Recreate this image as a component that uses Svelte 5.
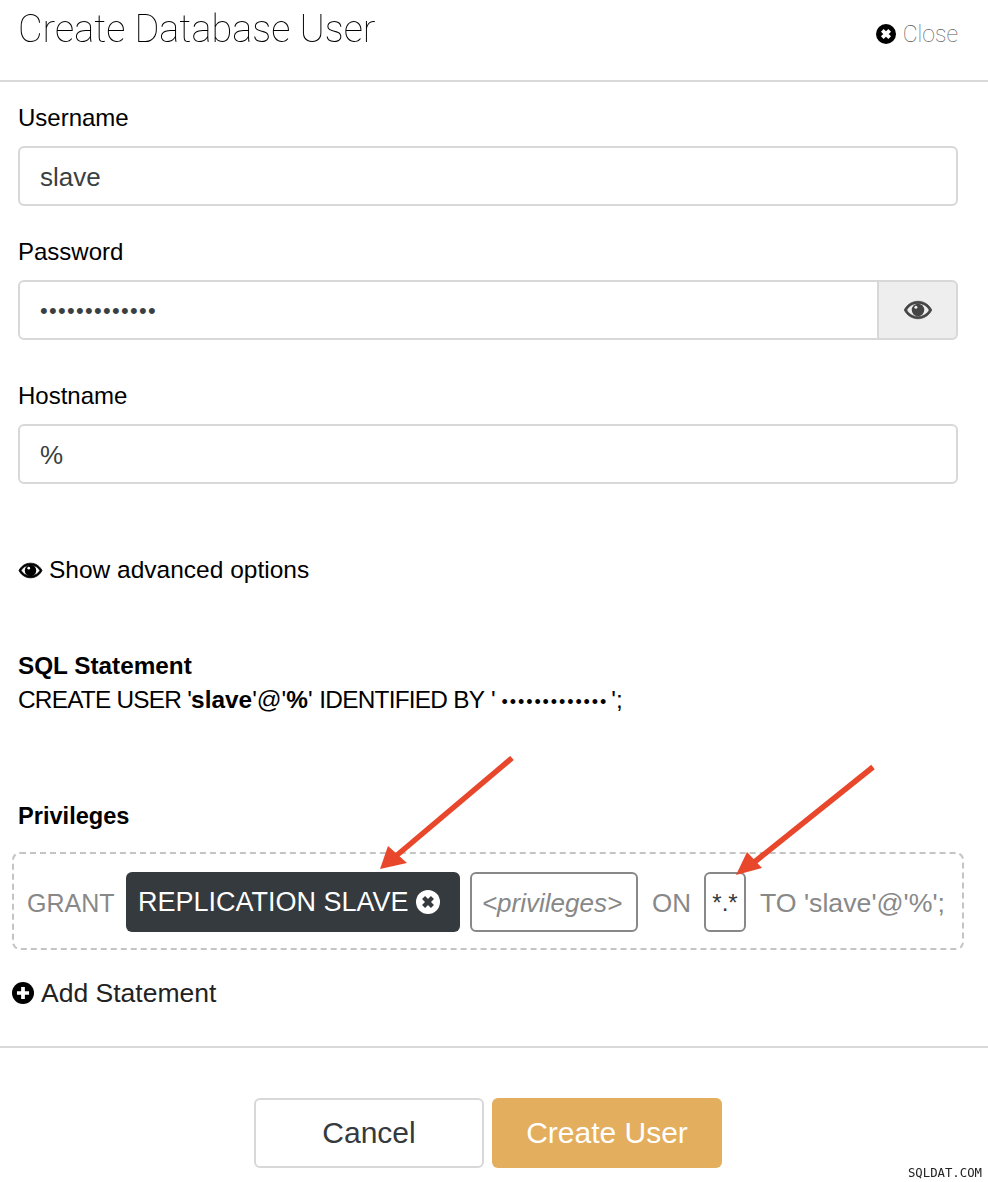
<script>
  const eyePath = 'M12 5C7 5 2.9 8 1 12c1.9 4 6 7 11 7s9.100-3 11-7c-1.900-4-6-7-11-7zm0 12.300c-4 0-7.300-2.200-9-5.300 1.700-3.100 5-5.300 9-5.300s7.300 2.200 9 5.300c-1.700 3.100-5 5.300-9 5.300z';
</script>

<div class="page">
  <header class="head">
    <h1>Create Database User</h1>
    <span class="close">
      <svg class="close-icon" viewBox="0 0 20 20"><circle cx="10" cy="10" r="10" fill="#000"/><path d="M6.300 6.300l7.400 7.400M13.700 6.300l-7.400 7.400" stroke="#fff" stroke-width="3.800"/></svg>
      Close
    </span>
  </header>

  <section class="fields">
    <label class="field-label" for="username">Username</label>
    <div class="input" id="username">slave</div>

    <label class="field-label" for="password">Password</label>
    <div class="input-group">
      <div class="input dots" id="password">•••••••••••••</div>
      <div class="addon">
        <svg class="eye-lg" viewBox="0 0 24 24"><path d={eyePath} fill="#444" stroke="#444" stroke-width="0.6"/><circle cx="12" cy="12" r="5" fill="#444"/><circle cx="10.300" cy="9.800" r="1.200" fill="#eee"/></svg>
      </div>
    </div>

    <label class="field-label" for="hostname">Hostname</label>
    <div class="input" id="hostname">%</div>
  </section>

  <div class="advanced">
    <svg class="eye-sm" viewBox="0 0 24 24"><path d={eyePath} fill="#000" stroke="#000" stroke-width="0.8"/><circle cx="12" cy="12" r="5.500" fill="#000"/><circle cx="10.300" cy="9.800" r="1.300" fill="#fff"/></svg>
    Show advanced options
  </div>

  <div class="sql">
    <strong class="sql-title">SQL Statement</strong>
    <div class="sql-line"><span class="sql-tight">CREATE USER '</span><strong>slave</strong>'@'<strong>%</strong>' <span class="sql-tight">IDENTIFIED BY</span> '<span class="sql-dots">•••••••••••••</span>';</div>
  </div>

  <h2>Privileges</h2>
  <div class="grant">
    <span class="kw g1">GRANT</span>
    <span class="chip">
      REPLICATION SLAVE
      <svg class="chip-x" viewBox="0 0 20 20"><circle cx="10" cy="10" r="10" fill="#fff"/><path d="M6.300 6.300l7.400 7.400M13.700 6.300l-7.400 7.400" stroke="#343a3e" stroke-width="3.600"/></svg>
    </span>
    <span class="box priv">&lt;privileges&gt;</span>
    <span class="kw on">ON</span>
    <span class="box scope">*.*</span>
    <span class="kw to">TO 'slave'@'%';</span>
  </div>

  <div class="add">
    <svg class="add-icon" viewBox="0 0 20 20"><circle cx="10" cy="10" r="10" fill="#000"/><path d="M10 4.500v11M4.500 10h11" stroke="#fff" stroke-width="3.400"/></svg>
    Add Statement
  </div>

  <footer class="foot">
    <button class="btn cancel">Cancel</button>
    <button class="btn create">Create User</button>
  </footer>

  <svg class="arrows" viewBox="0 0 988 1182">
    <g stroke="#e8472b" stroke-width="5.500" fill="#e8472b">
      <path d="M512 758L396 856" />
      <path d="M873 767L752 864" />
    </g>
    <polygon points="380,869 388,846 407,863" fill="#e8472b"/>
    <polygon points="736,875 747,852 762,868" fill="#e8472b"/>
  </svg>

  <span class="mark">SQLDAT.COM</span>
</div>

<style>
  :global(body) {
    margin: 0;
    background: #fff;
  }

  .page {
    position: relative;
    width: 988px;
    height: 1182px;
    overflow: hidden;
    font-family: "Liberation Sans", Arial, sans-serif;
    font-size: 24px;
    color: #000;
    background: #fff;
  }

  .head {
    display: flex;
    justify-content: space-between;
    height: 80px;
    padding: 0 30px 0 18px;
    border-bottom: 2px solid #d9d9d9;
  }

  h1 {
    margin: 7px 0 0;
    font-family: Roboto, sans-serif;
    font-weight: 100;
    font-size: 38px;
    line-height: 44px;
    color: #000;
    transform: translateZ(0);
  }

  .close {
    display: flex;
    align-items: center;
    gap: 7px;
    height: 24px;
    margin-top: 22px;
    font-family: Roboto, sans-serif;
    font-weight: 100;
    font-size: 23px;
    color: #555;
  }

  .close-icon {
    width: 20px;
    height: 20px;
  }

  .fields {
    display: flex;
    flex-direction: column;
    padding: 22px 30px 0 18px;
  }

  .field-label {
    height: 28px;
    line-height: 28px;
    margin-top: 0;
    margin-bottom: 14px;
  }

  .input {
    box-sizing: border-box;
    height: 60px;
    line-height: 58px;
    padding: 0 20px;
    border: 2px solid #d8d8d8;
    border-radius: 6px;
    color: #3a3f42;
    font-size: 26px;
    margin-bottom: 32px;
  }

  .input-group {
    display: flex;
    height: 60px;
    margin-bottom: 42px;
  }

  .input-group .input {
    flex: 1;
    border-radius: 6px 0 0 6px;
    margin-bottom: 0;
  }

  .dots {
    font-size: 22px;
    letter-spacing: 1.3px;
  }

  .addon {
    box-sizing: border-box;
    display: flex;
    align-items: center;
    justify-content: center;
    width: 79px;
    border: 2px solid #d8d8d8;
    border-left: 0;
    border-radius: 0 6px 6px 0;
    background: #eee;
  }

  .eye-lg {
    width: 30px;
    height: 30px;
  }

  .advanced {
    display: flex;
    align-items: center;
    gap: 6px;
    height: 28px;
    margin: 40px 0 0 18px;
    font-size: 24.5px;
  }

  .eye-sm {
    width: 25px;
    height: 25px;
  }

  .sql {
    margin: 65px 0 0 18px;
    line-height: 34px;
  }

  .sql-title {
    display: block;
    height: 34px;
    font-size: 24.300px;
  }

  .sql-line {
    height: 34px;
    font-size: 24.400px;
    white-space: nowrap;
  }

  .sql-tight {
    letter-spacing: -0.770px;
  }

  .sql-dots {
    margin: 0 3px 0 6px;
    font-size: 18px;
    letter-spacing: 1.900px;
  }

  h2 {
    margin: 84px 0 0 18px;
    font-size: 23.600px;
    line-height: 30px;
  }

  .grant {
    box-sizing: border-box;
    display: flex;
    align-items: center;
    width: 952px;
    height: 98px;
    margin: 21px 0 0 12px;
    padding: 2px 0 0 13px;
    border: 2px dashed #c4c4c4;
    border-radius: 8px;
    color: #888;
    font-size: 27px;
  }

  .kw {
    padding-top: 2px;
    white-space: nowrap;
  }

  .g1 {
    width: 99px;
    font-size: 25px;
  }

  .chip {
    box-sizing: border-box;
    display: flex;
    align-items: center;
    gap: 7px;
    width: 334px;
    height: 60px;
    padding-left: 12px;
    border-radius: 6px;
    background: #343a3e;
    color: #fff;
    white-space: nowrap;
  }

  .chip-x {
    width: 24px;
    height: 24px;
  }

  .box {
    box-sizing: border-box;
    display: flex;
    align-items: center;
    justify-content: center;
    height: 60px;
    padding-top: 2px;
    border: 2px solid #888;
    border-radius: 6px;
  }

  .priv {
    width: 168px;
    margin-left: 10px;
    padding-right: 4px;
    font-size: 26px;
    font-style: italic;
  }

  .on {
    margin-left: 14px;
    width: 52px;
    font-size: 26px;
  }

  .scope {
    width: 42px;
    color: #343a3e;
    font-size: 24px;
  }

  .to {
    margin-left: 14px;
    font-size: 26.700px;
  }

  .add {
    display: flex;
    align-items: center;
    gap: 7px;
    margin: 28px 0 0 12px;
    height: 30px;
    font-size: 26.500px;
    color: #222;
  }

  .add-icon {
    width: 22px;
    height: 22px;
  }

  .foot {
    display: flex;
    justify-content: center;
    gap: 8px;
    padding: 50px 12px 0 0;
    margin-top: 38px;
    border-top: 2px solid #d9d9d9;
  }

  .btn {
    box-sizing: border-box;
    width: 230px;
    height: 70px;
    border-radius: 6px;
    font-family: "Liberation Sans", Arial, sans-serif;
    font-size: 30px;
  }

  .cancel {
    background: #fff;
    border: 2px solid #d8d8d8;
    color: #343a3e;
  }

  .create {
    background: #e3ae5e;
    border: 0;
    color: #fff;
  }

  .arrows {
    position: absolute;
    inset: 0;
    width: 988px;
    height: 1182px;
    pointer-events: none;
  }

  .mark {
    position: absolute;
    right: 6px;
    bottom: 1px;
    font-family: "DejaVu Sans Mono", monospace;
    font-size: 12.300px;
    line-height: 16px;
    color: #222;
  }
</style>
